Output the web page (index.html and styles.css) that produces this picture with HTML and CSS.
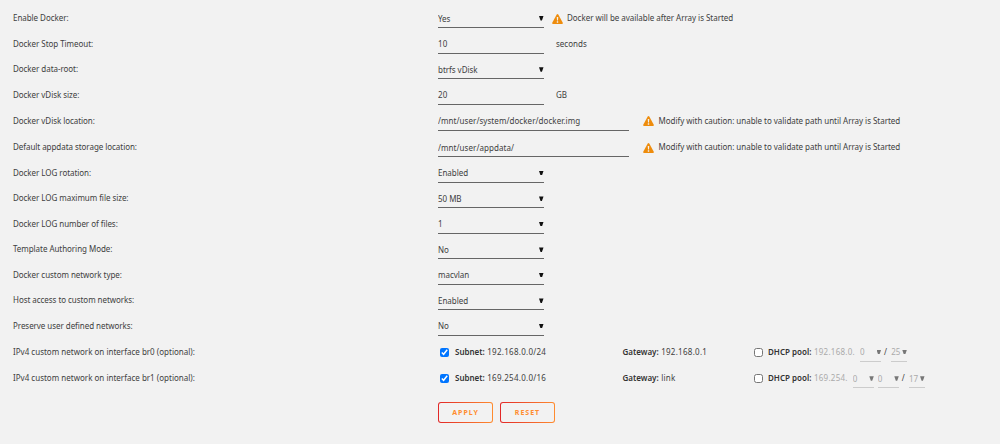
FILE: index.html
```html
<!DOCTYPE html>
<html lang="en">
<head>
    <meta charset="UTF-8">
    <meta name="viewport" content="width=device-width, initial-scale=1.0">
    <title>Docker Settings</title>
    <link rel="stylesheet" href="styles.css">
</head>
<body>
    <!-- Warning icon shared by the rows -->
    <svg class="sprite" width="0" height="0">
        <symbol id="warning" viewBox="0 0 22 20">
            <path fill="#ee8c0c" d="M9.4 1.2Q11-1 12.6 1.2L21.5 17.3Q22.5 20 19.8 20H2.2Q-.5 20 .5 17.3Z"/>
            <path fill="#f2f2f2" d="M9.5 6h3l-.5 7h-2zM9.6 14.5h2.8v2.8H9.6z"/>
        </symbol>
    </svg>

    <form class="settings">
        <div class="row">
            <label>Enable Docker:</label>
            <span class="select"><select><option>Yes</option></select></span>
            <span class="warning"><svg><use href="#warning"/></svg>Docker will be available after Array is Started</span>
        </div>
        <div class="row row-input">
            <label>Docker Stop Timeout:</label>
            <input class="narrow" type="text" value="10">
            <span class="unit">seconds</span>
        </div>
        <div class="row">
            <label>Docker data-root:</label>
            <span class="select"><select><option>btrfs vDisk</option></select></span>
        </div>
        <div class="row row-input">
            <label>Docker vDisk size:</label>
            <input class="narrow" type="text" value="20">
            <span class="unit">GB</span>
        </div>
        <div class="row row-path">
            <label>Docker vDisk location:</label>
            <input class="path" type="text" value="/mnt/user/system/docker/docker.img">
            <span class="warning path-warning"><svg><use href="#warning"/></svg>Modify with caution: unable to validate path until Array is Started</span>
        </div>
        <div class="row row-path">
            <label>Default appdata storage location:</label>
            <input class="path" type="text" value="/mnt/user/appdata/">
            <span class="warning path-warning"><svg><use href="#warning"/></svg>Modify with caution: unable to validate path until Array is Started</span>
        </div>
        <div class="row">
            <label>Docker LOG rotation:</label>
            <span class="select"><select><option>Enabled</option></select></span>
        </div>
        <div class="row">
            <label>Docker LOG maximum file size:</label>
            <span class="select"><select><option>50 MB</option></select></span>
        </div>
        <div class="row">
            <label>Docker LOG number of files:</label>
            <span class="select"><select><option>1</option></select></span>
        </div>
        <div class="row">
            <label>Template Authoring Mode:</label>
            <span class="select"><select><option>No</option></select></span>
        </div>
        <div class="row">
            <label>Docker custom network type:</label>
            <span class="select"><select><option>macvlan</option></select></span>
        </div>
        <div class="row">
            <label>Host access to custom networks:</label>
            <span class="select"><select><option>Enabled</option></select></span>
        </div>
        <div class="row">
            <label>Preserve user defined networks:</label>
            <span class="select"><select><option>No</option></select></span>
        </div>

        <!-- Custom networks -->
        <div class="row row-network">
            <label>IPv4 custom network on interface br0 (optional):</label>
            <div class="subnet"><input type="checkbox" checked><b>Subnet:</b><span>192.168.0.0/24</span></div>
            <div class="gateway"><b>Gateway:</b><span>192.168.0.1</span></div>
            <div class="pool">
                <input type="checkbox"><b>DHCP pool:</b><span class="muted">192.168.0.</span>
                <span class="select octet"><select disabled><option>0</option></select></span>
                <span class="slash">/</span>
                <span class="select mask"><select disabled><option>25</option></select></span>
            </div>
        </div>
        <div class="row row-network">
            <label>IPv4 custom network on interface br1 (optional):</label>
            <div class="subnet"><input type="checkbox" checked><b>Subnet:</b><span>169.254.0.0/16</span></div>
            <div class="gateway"><b>Gateway:</b><span>link</span></div>
            <div class="pool">
                <input type="checkbox"><b>DHCP pool:</b><span class="muted">169.254.</span>
                <span class="select octet"><select disabled><option>0</option></select></span>
                <span class="select octet next"><select disabled><option>0</option></select></span>
                <span class="slash">/</span>
                <span class="select mask"><select disabled><option>17</option></select></span>
            </div>
        </div>

        <div class="buttons">
            <button type="button">APPLY</button>
            <button type="button">RESET</button>
        </div>
    </form>
</body>
</html>
```
FILE: styles.css
```css
* {
    box-sizing: border-box;
}

body {
    margin: 0;
    background-color: #f2f2f2;
    color: #404040;
    font-family: "Noto Sans", sans-serif;
    font-size: 8px;
    line-height: 12px;
    white-space: nowrap;
}

.sprite {
    display: block;
}

.settings {
    padding: 5.25px 0 0 13px;
}

/* One setting per row */
.row {
    display: flex;
    align-items: center;
    height: 25.5px;
}

.row-input {
    height: 25.8px;
}

.row-path {
    height: 26.2px;
}

.row-network {
    height: 26.4px;
}

.row > label {
    width: 425px;
    flex: none;
    letter-spacing: -0.05px;
}

.row-network > label {
    letter-spacing: 0.01px;
}

/* Fields */
input[type="text"],
select {
    display: block;
    height: 20px;
    margin: 0;
    padding: 1px 0 0;
    border: 0;
    border-bottom: 1px solid #666;
    border-radius: 0;
    background: transparent;
    color: #404040;
    font-family: inherit;
    font-size: 8px;
    letter-spacing: 0.06px;
    outline: 0;
    appearance: none;
}

select {
    letter-spacing: -0.03px;
}

.narrow,
.select {
    width: 105.5px;
}

.path {
    width: 191px;
}

.select {
    position: relative;
    flex: none;
}

.select select {
    width: 100%;
}

.select::after {
    content: "";
    position: absolute;
    top: 8px;
    right: 0;
    width: 4.5px;
    height: 4.5px;
    background: #111;
    clip-path: polygon(0 0, 100% 0, 65% 100%, 35% 100%);
}

.unit {
    margin-left: 12.5px;
}

.warning {
    display: flex;
    align-items: center;
    margin-left: 8px;
    letter-spacing: -0.03px;
}

.warning svg {
    width: 11px;
    height: 10px;
    margin: 1px 4.5px 0 0;
}

.path-warning {
    margin-left: 14px;
}

/* Networks */
.subnet,
.gateway,
.pool {
    display: flex;
    align-items: center;
    flex: none;
}

.subnet {
    width: 184.5px;
    padding-left: 2px;
}

.gateway {
    width: 131px;
}

.row-network b {
    margin-right: 2.5px;
    color: #333;
    font-weight: 600;
}

.row-network span {
    letter-spacing: 0.27px;
}

input[type="checkbox"] {
    width: 9px;
    height: 9px;
    margin: 1px 6px 0 0;
}

.pool input[type="checkbox"] {
    margin-right: 5.5px;
}

.muted {
    color: #aaa;
}

.pool select {
    border-color: #ccc;
    color: #aaa;
    opacity: 1;
}

.pool .select::after {
    background: #777;
}

.octet {
    width: 21px;
    margin-left: 5px;
}

.next {
    margin-left: 4px;
}

.slash {
    margin: 0 4px 0 3px;
}

.mask {
    width: 15.5px;
}

/* Buttons */
.buttons {
    display: flex;
    gap: 7px;
    margin: 10.5px 0 0 425px;
}

button {
    width: 55px;
    height: 21px;
    padding: 0;
    border: 1px solid transparent;
    border-radius: 3px;
    background: linear-gradient(#f2f2f2, #f2f2f2) padding-box, linear-gradient(90deg, #e22828, #ff8c2f) border-box;
    color: #ff8c2f;
    font-family: inherit;
    font-size: 7px;
    font-weight: 700;
    letter-spacing: 1px;
}
```
